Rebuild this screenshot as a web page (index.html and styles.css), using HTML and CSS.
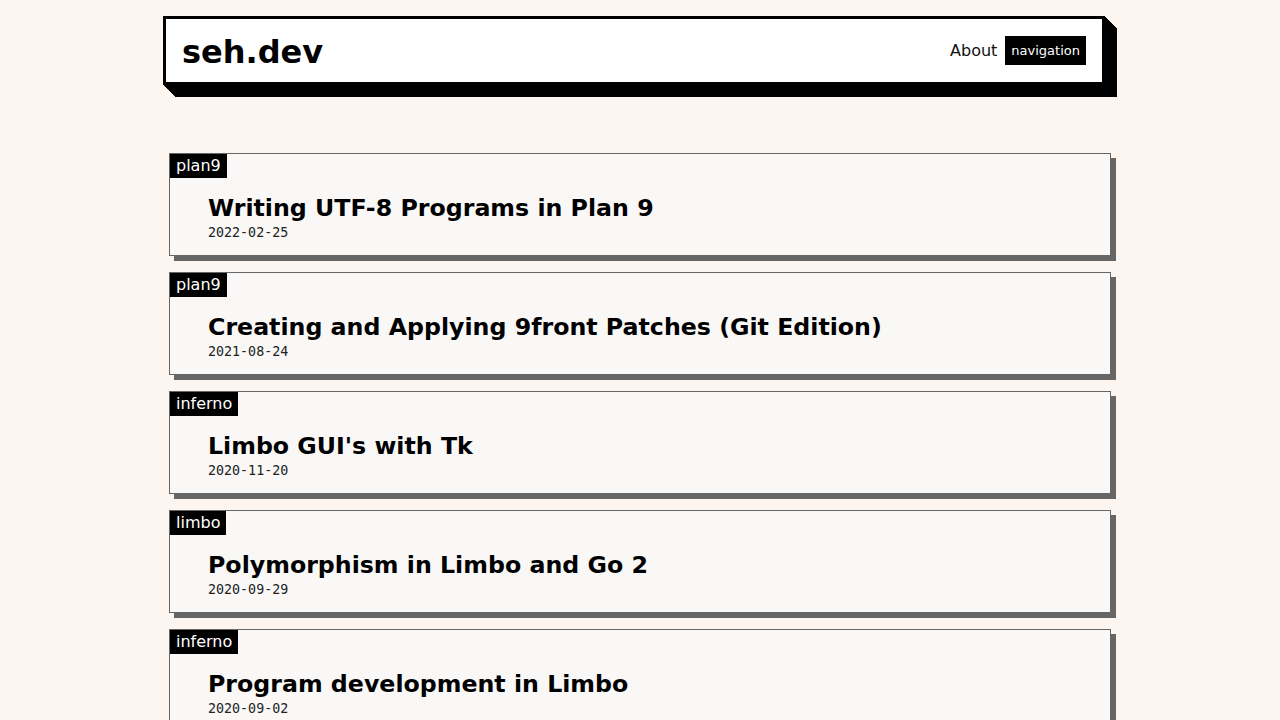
FILE: index.html
```html
<!DOCTYPE html>
<html lang="en">
<head>
<meta charset="utf-8">
<title>seh.dev</title>
<link rel="stylesheet" href="styles.css">
</head>
<body>
<div class="wrap">
  <header class="site-header">
    <a class="brand" href="#">seh.dev</a>
    <nav class="nav">
      <a class="nav-link" href="#">About</a>
      <span class="nav-label">navigation</span>
    </nav>
  </header>

  <main class="posts">
    <article class="card">
      <span class="tag">plan9</span>
      <div class="card-body">
        <h2 class="title">Writing UTF-8 Programs in Plan 9</h2>
        <time class="date">2022-02-25</time>
      </div>
    </article>
    <article class="card">
      <span class="tag">plan9</span>
      <div class="card-body">
        <h2 class="title">Creating and Applying 9front Patches (Git Edition)</h2>
        <time class="date">2021-08-24</time>
      </div>
    </article>
    <article class="card">
      <span class="tag">inferno</span>
      <div class="card-body">
        <h2 class="title">Limbo GUI's with Tk</h2>
        <time class="date">2020-11-20</time>
      </div>
    </article>
    <article class="card">
      <span class="tag">limbo</span>
      <div class="card-body">
        <h2 class="title">Polymorphism in Limbo and Go 2</h2>
        <time class="date">2020-09-29</time>
      </div>
    </article>
    <article class="card">
      <span class="tag">inferno</span>
      <div class="card-body">
        <h2 class="title">Program development in Limbo</h2>
        <time class="date">2020-09-02</time>
      </div>
    </article>
  </main>
</div>
</body>
</html>
```

FILE: styles.css
```css
html, body {
  margin: 0;
  padding: 0;
}

body {
  background: #fdf6f0;
  font-family: "DejaVu Sans", sans-serif;
  color: #000;
}

a {
  color: inherit;
  text-decoration: none;
}

.wrap {
  width: 954px;
  margin: 0 auto;
  padding-top: 16px;
}

.site-header {
  box-sizing: border-box;
  width: 942px;
  height: 69px;
  border: 3px solid #000;
  background: #fff;
  display: flex;
  align-items: center;
  justify-content: space-between;
  padding: 0 16px 0 16px;
  box-shadow:
    1px 1px 0 #000, 2px 2px 0 #000, 3px 3px 0 #000, 4px 4px 0 #000,
    5px 5px 0 #000, 6px 6px 0 #000, 7px 7px 0 #000, 8px 8px 0 #000,
    9px 9px 0 #000, 10px 10px 0 #000, 11px 11px 0 #000, 12px 12px 0 #000;
}

.brand {
  font-size: 32px;
  font-weight: bold;
  line-height: 1;
  margin-top: 2px;
}

.nav {
  display: flex;
  align-items: center;
  gap: 8px;
}

.nav-link {
  font-size: 16px;
  color: #111;
}

.nav-label {
  background: #000;
  color: #fff;
  font-size: 13px;
  line-height: 29px;
  padding: 0 6px;
}

.posts {
  padding-top: 68px;
  padding-left: 6px;
  display: flex;
  flex-direction: column;
  gap: 16px;
}

.card {
  box-sizing: border-box;
  width: 942px;
  background: #f9f8f6;
  border: 1px solid #666;
  box-shadow: 5px 5px 0 #666;
}

.tag {
  display: inline-block;
  vertical-align: top;
  background: #000;
  color: #fff;
  font-size: 16px;
  line-height: 24px;
  padding: 0 6px;
}

.card-body {
  padding: 16px 38px 14px 38px;
}

.title {
  margin: 0;
  font-size: 23.7px;
  font-weight: bold;
  line-height: 28px;
}

.date {
  display: block;
  margin-top: 2px;
  font-family: "DejaVu Sans Mono", monospace;
  font-size: 13.33px;
  line-height: 17px;
  color: #222;
}
```
